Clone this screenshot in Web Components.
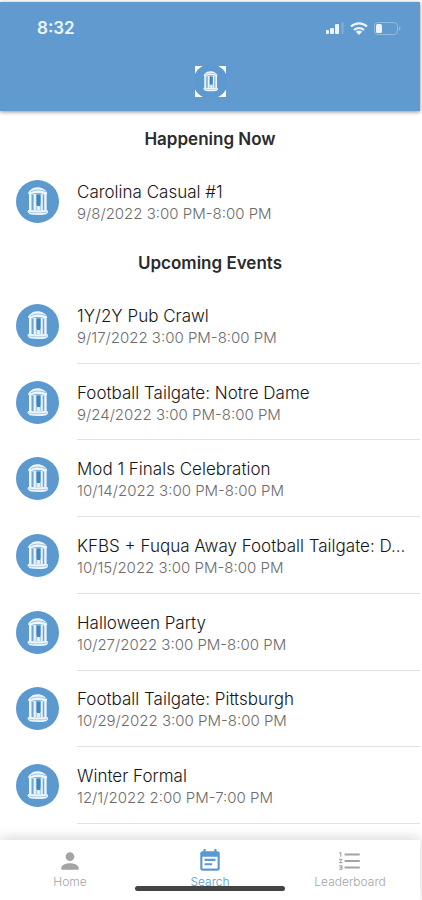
<!DOCTYPE html>
<html lang="en">
<head>
<meta charset="utf-8">
<meta name="viewport" content="width=device-width, initial-scale=1">
<title>Events</title>
<style>
html, body { height: 100%; margin: 0; }
body { background: #fff; font-family: Inter, "Liberation Sans", sans-serif; color: #2b2b2b; }
</style>
</head>
<body>
<events-app>
  <app-header slot="header"></app-header>
  <event-section heading="Happening Now">
    <event-row name="Carolina Casual #1" when="9/8/2022 3:00 PM-8:00 PM"></event-row>
  </event-section>
  <event-section class="grow" heading="Upcoming Events" divided>
    <event-row name="1Y/2Y Pub Crawl" when="9/17/2022 3:00 PM-8:00 PM"></event-row>
    <event-row name="Football Tailgate: Notre Dame" when="9/24/2022 3:00 PM-8:00 PM"></event-row>
    <event-row name="Mod 1 Finals Celebration" when="10/14/2022 3:00 PM-8:00 PM"></event-row>
    <event-row name="KFBS + Fuqua Away Football Tailgate: D..." when="10/15/2022 3:00 PM-8:00 PM"></event-row>
    <event-row name="Halloween Party" when="10/27/2022 3:00 PM-8:00 PM"></event-row>
    <event-row name="Football Tailgate: Pittsburgh" when="10/29/2022 3:00 PM-8:00 PM"></event-row>
    <event-row name="Winter Formal" when="12/1/2022 2:00 PM-7:00 PM"></event-row>
  </event-section>
  <tab-bar slot="tabs">
    <tab-item label="Home"><svg viewBox="0 0 24 24"><path d="M12 12c2.210 0 4-1.790 4-4s-1.790-4-4-4-4 1.790-4 4 1.790 4 4 4zm0 2c-2.670 0-8 1.340-8 4v2h16v-2c0-2.660-5.330-4-8-4z"/></svg></tab-item>
    <tab-item label="Search" active><svg viewBox="0 0 24 24"><path d="M17 10H7v2h10v-2zm2-7h-1V1h-2v2H8V1H6v2H5c-1.110 0-2 .9-2 2v14c0 1.100.890 2 2 2h14c1.100 0 2-.9 2-2V5c0-1.100-.9-2-2-2zm0 16H5V8h14v11zm-5-5H7v2h7v-2z"/></svg></tab-item>
    <tab-item label="Leaderboard"><svg viewBox="0 0 24 24"><path d="M2 17h2v.5H3v1h1v.5H2v1h3v-4H2v1zm1-9h1V4H2v1h1v3zm-1 3h1.800L2 13.100v.9h3v-1H3.200L5 10.900V10H2v1zm5-6v2h14V5H7zm0 14h14v-2H7v2zm0-6h14v-2H7v2z"/></svg></tab-item>
  </tab-bar>
</events-app>

<script>
const define = (tag, html, setup) => customElements.define(tag, class extends HTMLElement {
  constructor() {
    super();
    const t = document.createElement('template');
    t.innerHTML = html;
    this.attachShadow({ mode: 'open' }).append(t.content.cloneNode(true));
  }
  connectedCallback() { if (setup) setup(this, this.shadowRoot); }
});

define('well-logo', `
<style>
:host { display: block; width: 43px; height: 43px; flex: none; }
svg { display: block; width: 100%; height: 100%; }
.corners { display: none; }
:host([framed]) .corners { display: block; }
:host([framed]) .disc { r: 24px; }
</style>
<svg viewBox="0 0 43 43" aria-hidden="true">
  <path class="corners" fill="#fff" d="M0 0h43v43H0z"/>
  <circle class="disc" cx="21.500" cy="21.500" r="21.500" fill="#5b99cf"/>
  <path fill="#a9cce9" d="M13 13.500h17.500V31H13z"/>
  <path fill="#eef6fc" d="M12 13.500c0-2 3-4 5-5.500 4-1.300 8-.8 10.500 1 2 1 3.500 2.500 3.700 4.500l-1.200 1c-5-2-11-2.300-16.500 0z"/>
  <path stroke="#8fbbe0" stroke-width=".9" fill="none" d="M14.500 12c4-2.400 10-2.600 15.500-.3"/>
  <path fill="#6fa6d7" d="M16 15h1.200v15H16zM27 15h1v15h-1z"/>
  <path fill="#3e83c2" d="M20.500 14.500h4V24l-1 3.500h-2l-1-3.500z"/>
  <path fill="#eef6fc" d="M13 14h2v16h-2zM18 14h1.700v16H18zM25 14h1.500v16H25zM28.500 14h2v16h-2zM21.200 26h2.600v4h-2.600z"/>
  <path fill="#eef6fc" d="M12 30l10 .6 9.500-.6.700 2.500-2 1.700c-5 1.100-11 1.100-16.500.1L11.500 32z"/>
  <path stroke="#8fbbe0" stroke-width=".7" fill="none" d="M12.500 32c6 1.200 13 1 19 0"/>
</svg>`);

define('status-bar', `
<style>
:host { display: flex; justify-content: space-between; align-items: center; padding: 0 19px 0 37px; height: 20px; color: #edf5fc; }
time { font-size: 17px; line-height: 20px; font-weight: 600; }
.icons { display: flex; align-items: center; gap: 6px; }
svg { display: block; fill: currentColor; }
</style>
<time>8:32</time>
<div class="icons">
  <svg width="18" height="12" viewBox="0 0 18 12"><rect y="8" width="3" height="4" rx="1"/><rect x="4" y="6" width="4" height="6" rx="1"/><rect x="9" y="2" width="4" height="10" rx="1"/><rect x="15.500" y="0" width="2" height="12" rx="1" opacity=".25"/></svg>
  <svg width="18" height="13" viewBox="0 0 18 13"><g fill="none" stroke="currentColor" stroke-width="2.200"><path d="M1 4.500c4.500-4.300 11.500-4.300 16 0"/><path d="M4 8c3-2.700 7-2.700 10 0"/></g><path d="M5.800 9.800c1.900-1.600 4.500-1.600 6.400 0L9 13z"/></svg>
  <svg width="27" height="13" viewBox="0 0 27 13"><rect x=".5" y=".5" width="23" height="12" rx="3.500" fill="none" stroke="currentColor" opacity=".35"/><rect x="2" y="2" width="6" height="9" rx="1.500"/><path opacity=".4" d="M25 4.500c2 .8 2 3.200 0 4z"/></svg>
</div>`);

define('app-header', `
<style>
:host { display: block; margin-top: 2px; padding: 16px 0 14px; background: #609acf; box-shadow: 0 1px 4px rgba(0,0,0,.45); position: relative; }
.brand { display: flex; justify-content: center; padding-top: 28px; }
well-logo { width: 31px; height: 31px; }
</style>
<status-bar></status-bar>
<div class="brand"><well-logo framed></well-logo></div>`);

define('event-row', `
<style>
:host { display: flex; align-items: center; gap: 18px; padding-left: 16px; min-height: 76px; box-sizing: border-box; }
.text { flex: 1; min-width: 0; align-self: stretch; display: flex; flex-direction: column; justify-content: center; padding: 4px 12px 0 0; border-bottom: 1px solid var(--divider, transparent); }
.name { font-size: 17px; line-height: 22px; font-weight: 300; white-space: nowrap; overflow: hidden; text-overflow: ellipsis; color: #161616; }
.when { font-size: 15px; line-height: 22px; font-weight: 300; color: #6c6c6c; }
</style>
<well-logo></well-logo>
<div class="text"><div class="name"></div><div class="when"></div></div>`,
(el, root) => {
  root.querySelector('.name').textContent = el.getAttribute('name');
  root.querySelector('.when').textContent = el.getAttribute('when');
});

define('event-section', `
<style>
:host { display: flex; flex-direction: column; }
:host([divided]) { --divider: #e2e2e2; }
h2 { margin: 0; padding: 12px 0; font-size: 17px; line-height: 24px; font-weight: 600; text-align: center; color: #2b2b2b; }
.rows { flex: 1; display: grid; grid-template-columns: minmax(0, 1fr); grid-auto-rows: 1fr; }
</style>
<h2></h2><div class="rows"><slot></slot></div>`,
(el, root) => { root.querySelector('h2').textContent = el.getAttribute('heading'); });

define('tab-item', `
<style>
:host { display: block; flex: 1; color: #a4a4a4; }
:host([active]) { color: #5b99cf; }
button { all: unset; display: flex; flex-direction: column; align-items: center; width: 100%; gap: 1px; cursor: pointer; }
::slotted(svg) { display: block; width: 26px; height: 26px; fill: currentColor; }
span { font-size: 12px; line-height: 14px; font-weight: 300; }
</style>
<button type="button"><slot></slot><span></span></button>`,
(el, root) => { root.querySelector('span').textContent = el.getAttribute('label'); });

define('tab-bar', `
<style>
:host { display: block; position: relative; padding: 8px 0 11px; background: #fff; box-shadow: 0 -2px 12px rgba(0,0,0,.16); }
nav { display: flex; }
.indicator { position: absolute; bottom: 9px; left: 50%; width: 150px; height: 5px; transform: translateX(-50%); border-radius: 3px; background: #444; }
</style>
<nav><slot></slot></nav><div class="indicator"></div>`);

define('events-app', `
<style>
:host { display: flex; flex-direction: column; min-height: 100%; padding-right: 2px; box-sizing: border-box; overflow: hidden; }
main { flex: 1; display: flex; flex-direction: column; padding: 4px 0 16px; }
::slotted(.grow) { flex: 1; }
</style>
<slot name="header"></slot>
<main><slot></slot></main>
<slot name="tabs"></slot>`);
</script>
</body>
</html>
